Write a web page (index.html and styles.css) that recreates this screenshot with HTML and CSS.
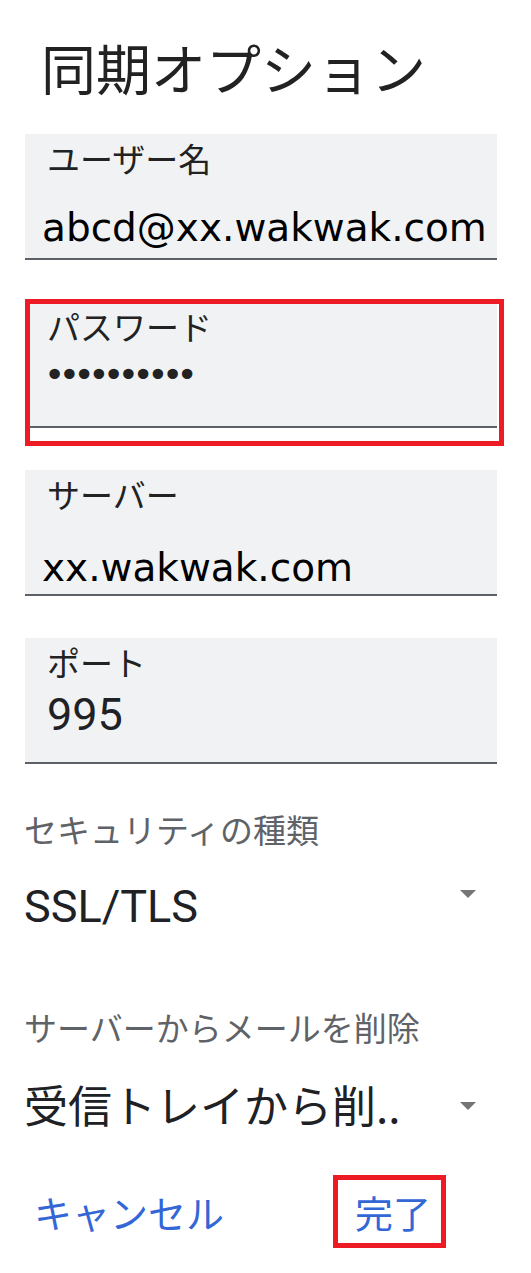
FILE: index.html
```html
<!DOCTYPE html>
<html lang="ja">
<head>
  <meta charset="UTF-8" />
  <meta name="viewport" content="width=device-width, initial-scale=1.0"/>
  <title>同期オプション</title>
  <link rel="stylesheet" href="styles.css">
</head>
<body>

  <h1 class="title">同期オプション</h1>

  <div class="fields">
    <div class="field">
      <div class="field-label">ユーザー名</div>
      <div class="field-value">abcd@xx.wakwak.com</div>
    </div>

    <div class="field field--marked">
      <div class="field-label">パスワード</div>
      <div class="field-dots">••••••••••</div>
    </div>

    <div class="field">
      <div class="field-label">サーバー</div>
      <div class="field-value field-value--low">xx.wakwak.com</div>
    </div>

    <div class="field">
      <div class="field-label">ポート</div>
      <div class="field-number">995</div>
    </div>
  </div>

  <div class="select-block">
    <div class="select-label">セキュリティの種類</div>
    <div class="select-row">
      <span class="select-value select-value--latin">SSL/TLS</span>
      <span class="arrow arrow--high"></span>
    </div>
  </div>

  <div class="select-block">
    <div class="select-label">サーバーからメールを削除</div>
    <div class="select-row">
      <span class="select-value">受信トレイから削..</span>
      <span class="arrow"></span>
    </div>
  </div>

  <div class="actions">
    <span class="action">キャンセル</span>
    <span class="action action--done">完了</span>
  </div>

</body>
</html>
```

FILE: styles.css
```css
* { box-sizing: border-box; }
body {
  margin: 0; padding: 0;
  background: #fff;
  color: #222;
  font-family: "Noto Sans CJK JP", "Noto Sans", sans-serif;
  width: 531px; min-height: 1273px;
}
.title {
  margin: 39px 0 40px 41px;
  font-size: 55px; line-height: 55px;
  font-weight: 400; color: #222;
}
.fields {
  margin: 0 34px 0 25px;
  display: flex; flex-direction: column;
  gap: 42px;
}
.field {
  position: relative;
  height: 126px;
  background: #f1f2f4;
  border-bottom: 2px solid #5d6067;
}
.field-label {
  padding: 8px 0 0 22px;
  font-size: 33px; line-height: 33px;
  color: #222;
}
.field-value {
  margin-top: 31px; padding-left: 17px;
  font-family: "DejaVu Sans", sans-serif;
  font-size: 39px; line-height: 44px;
  color: #000;
}
.field-value--low { margin-top: 35px; }
.field-dots {
  margin-top: 14px; padding-left: 19px;
  font-family: "DejaVu Sans", sans-serif;
  font-size: 36px; line-height: 36px;
  letter-spacing: -6.5px;
  color: #222;
}
.field-number {
  margin-top: 13px; padding-left: 22px;
  font-family: Roboto, sans-serif;
  font-size: 45px; line-height: 45px;
  color: #202124;
}
/* red annotation frame */
.field--marked::after {
  content: "";
  position: absolute; left: 0; top: -3px;
  width: 469px; height: 137px;
  border: 5px solid #ed1c24;
}
.select-block {
  height: 198px;
  padding: 0 55px 0 24px;
}
.fields + .select-block { margin-top: 49px; }
.select-label {
  font-size: 33px; line-height: 33px;
  color: #5f6368;
}
.select-row {
  margin-top: 38px;
  display: flex; justify-content: space-between;
  align-items: flex-start;
}
.select-value {
  font-size: 44px; line-height: 44px;
  color: #202124;
}
.select-value--latin {
  font-family: Roboto, sans-serif;
  font-size: 45px; line-height: 45px;
}
.arrow {
  width: 0; height: 0;
  margin-top: 20px;
  border-left: 8px solid transparent;
  border-right: 8px solid transparent;
  border-top: 8px solid #757575;
}
.arrow--high { margin-top: 6px; }
.actions {
  margin-top: -16px;
  padding-left: 34px;
  display: flex; align-items: flex-start;
}
.action {
  position: relative;
  font-size: 38px; line-height: 38px;
  color: #3367d6;
}
.action--done { margin-left: 131px; }
.action--done::after {
  content: "";
  position: absolute; left: -22px; top: -18px;
  right: -15px; bottom: -17px;
  border: 5px solid #ed1c24;
}
```
